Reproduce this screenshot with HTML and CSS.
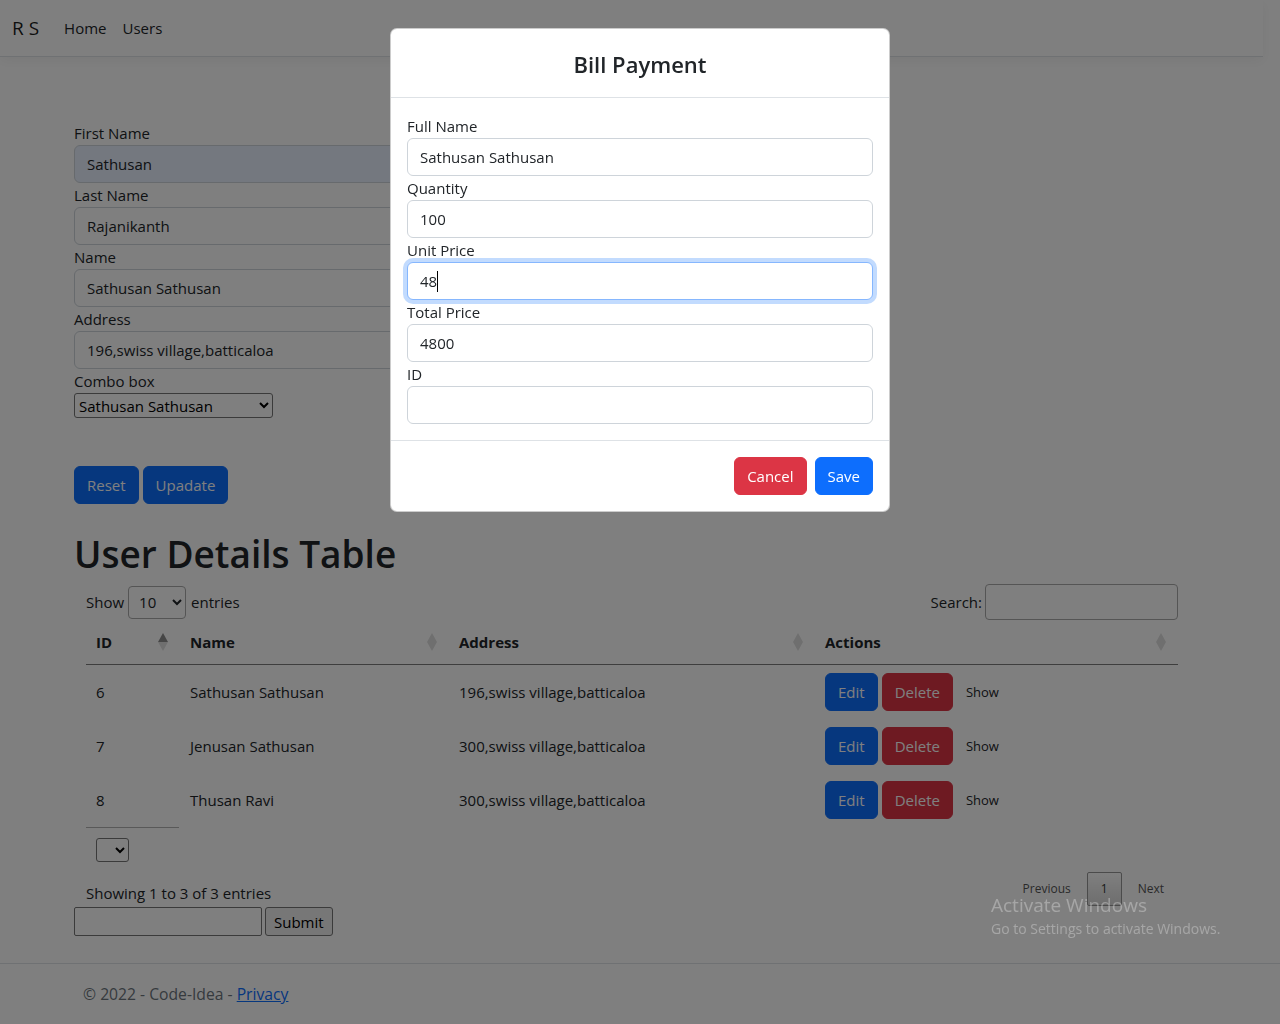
FILE: index.html
```html
<!DOCTYPE html>
<html lang="en">
<head>
<meta charset="utf-8">
<title>Users - R S</title>
<link rel="stylesheet" href="styles.css">
</head>
<body>
<header class="navbar">
  <a class="brand" href="#">R S</a>
  <nav class="nav">
    <a class="nav-link" href="#">Home</a>
    <a class="nav-link" href="#">Users</a>
  </nav>
</header>

<main class="container">
  <form class="user-form">
    <div class="field"><label>First Name</label><input class="form-control autofill" value="Sathusan"></div>
    <div class="field"><label>Last Name</label><input class="form-control" value="Rajanikanth"></div>
    <div class="field"><label>Name</label><input class="form-control" value="Sathusan Sathusan"></div>
    <div class="field"><label>Address</label><input class="form-control" value="196,swiss village,batticaloa"></div>
    <div class="field"><label>Combo box</label><select class="combo"><option>Sathusan Sathusan</option></select></div>
    <div class="form-actions">
      <button type="button" class="btn btn-primary">Reset</button>
      <button type="button" class="btn btn-primary">Upadate</button>
    </div>
  </form>

  <h1 class="title">User Details Table</h1>

  <div class="dt-wrapper">
    <div class="dt-top">
      <label class="dt-length">Show <select class="dt-select"><option>10</option></select> entries</label>
      <label class="dt-search">Search:<input class="dt-input"></label>
    </div>
    <table class="dt-table">
      <colgroup><col class="c-id"><col class="c-name"><col class="c-addr"><col class="c-act"></colgroup>
      <thead>
        <tr><th class="sort asc">ID</th><th class="sort">Name</th><th class="sort">Address</th><th class="sort">Actions</th></tr>
      </thead>
      <tbody>
        <tr><td>6</td><td>Sathusan Sathusan</td><td>196,swiss village,batticaloa</td>
          <td><div class="acts"><button class="btn btn-primary">Edit</button><button class="btn btn-danger">Delete</button><a class="show-link">Show</a></div></td></tr>
        <tr><td>7</td><td>Jenusan Sathusan</td><td>300,swiss village,batticaloa</td>
          <td><div class="acts"><button class="btn btn-primary">Edit</button><button class="btn btn-danger">Delete</button><a class="show-link">Show</a></div></td></tr>
        <tr><td>8</td><td>Thusan Ravi</td><td>300,swiss village,batticaloa</td>
          <td><div class="acts"><button class="btn btn-primary">Edit</button><button class="btn btn-danger">Delete</button><a class="show-link">Show</a></div></td></tr>
      </tbody>
    </table>
    <div class="dt-line"></div>
    <select class="tiny-select"></select>
    <div class="dt-bottom">
      <div class="dt-info">Showing 1 to 3 of 3 entries</div>
      <div class="dt-paginate">
        <a class="pg disabled">Previous</a><a class="pg current">1</a><a class="pg disabled">Next</a>
      </div>
    </div>
  </div>

  <form class="submit-form">
    <input class="plain-input"><button type="button" class="plain-btn">Submit</button>
  </form>
</main>

<footer class="footer">&copy; 2022 - Code-Idea - <a href="#">Privacy</a></footer>

<div class="backdrop"></div>

<div class="modal">
  <div class="modal-dialog">
    <div class="modal-content">
      <div class="modal-header"><h4 class="modal-title">Bill Payment</h4></div>
      <div class="modal-body">
        <div class="field"><label>Full Name</label><input class="form-control" value="Sathusan Sathusan"></div>
        <div class="field"><label>Quantity</label><input class="form-control" value="100"></div>
        <div class="field"><label>Unit Price</label>
          <div class="caret-wrap"><input class="form-control focused" value="48"><span class="caret"></span></div>
        </div>
        <div class="field"><label>Total Price</label><input class="form-control" value="4800"></div>
        <div class="field"><label>ID</label><input class="form-control" value=""></div>
      </div>
      <div class="modal-footer">
        <button type="button" class="btn btn-danger">Cancel</button>
        <button type="button" class="btn btn-save">Save</button>
      </div>
    </div>
  </div>
</div>

<div class="watermark">
  <div class="wm-title">Activate Windows</div>
  <div class="wm-sub">Go to Settings to activate Windows.</div>
</div>
</body>
</html>
```

FILE: styles.css
```css
* { box-sizing: border-box; }
html, body { margin: 0; }
body {
  font-family: "Open Sans", "Noto Sans", sans-serif;
  font-size: 15px;
  line-height: 24px;
  color: #212529;
  background: #fff;
  height: 1024px;
  overflow: hidden;
}

/* navbar */
.navbar {
  display: flex;
  align-items: center;
  height: 57px;
  margin-right: 17px;
  padding: 0 12px;
  border-bottom: 1px solid #dee2e6;
  box-shadow: 0 4px 12px rgba(0,0,0,.05);
  background: #fff;
}
.brand {
  font-size: 19px;
  line-height: 30px;
  color: rgba(0,0,0,.9);
  text-decoration: none;
  margin-right: 17px;
}
.nav { display: flex; }
.nav-link {
  padding: 8px;
  color: #212529;
  text-decoration: none;
}

/* main */
.container {
  width: 1116px;
  margin: 64px 0 0 74px;
}
.field label { display: block; line-height: 24px; }
.form-control {
  display: block;
  width: 356px;
  height: 38px;
  padding: 6px 12px;
  font: inherit;
  color: #212529;
  background: #fff;
  border: 1px solid #ced4da;
  border-radius: 6px;
  outline: none;
}
.autofill { background: #e8f0fe; }
.combo {
  display: block;
  width: 199px;
  height: 25px;
  font-family: inherit;
  font-size: 15px;
  color: #000;
  background: #fff;
  border: 1px solid #767676;
  border-radius: 3px;
}
.form-actions {
  display: flex;
  gap: 4px;
  margin-top: 48px;
}
.btn {
  display: inline-block;
  font: inherit;
  line-height: 24px;
  padding: 6px 12px;
  border: 1px solid transparent;
  border-radius: 6px;
  color: #fff;
  cursor: pointer;
}
.btn-primary { background: #0d6efd; border-color: #0d6efd; }
.btn-danger { background: #dc3545; border-color: #dc3545; }
.btn-save { background: #0d6efd; border-color: #0d6efd; }

.title {
  margin: 26px 0 6px;
  font-size: 37px;
  font-weight: 600;
  line-height: 48px;
}

/* datatable */
.dt-wrapper { margin: 0 12px; }
.dt-top {
  display: flex;
  justify-content: space-between;
  align-items: center;
  height: 36px;
}
.dt-length, .dt-search { display: flex; align-items: center; }
.dt-select {
  width: 58px;
  height: 33px;
  margin: 0 5px 0 4px;
  padding: 4px 6px;
  font-family: inherit;
  font-size: 15px;
  color: #212529;
  background: transparent;
  border: 1px solid #aaa;
  border-radius: 4px;
}
.dt-input {
  width: 193px;
  height: 36px;
  margin-left: 3px;
  border: 1px solid #aaa;
  border-radius: 4px;
  background: transparent;
  font: inherit;
}
.dt-table {
  width: 1092px;
  border-collapse: collapse;
  table-layout: fixed;
}
.c-id { width: 94px; }
.c-name { width: 269px; }
.c-addr { width: 366px; }
.c-act { width: 363px; }
.dt-table th {
  position: relative;
  text-align: left;
  font-weight: 700;
  height: 44px;
  padding: 10px 18px 10px 10px;
  border-bottom: 1px solid rgba(0,0,0,.3);
}
.sort::before, .sort::after {
  content: "";
  position: absolute;
  right: 12px;
  width: 0;
  height: 0;
  border-left: 5px solid transparent;
  border-right: 5px solid transparent;
}
.sort::before {
  top: 13px;
  border-bottom: 9px solid rgba(0,0,0,.13);
}
.sort::after {
  top: 22px;
  border-top: 9px solid rgba(0,0,0,.13);
}
.sort.asc::before { border-bottom-color: rgba(0,0,0,.45); }
.dt-table td {
  height: 54px;
  padding: 8px 10px;
  vertical-align: middle;
}
.acts { display: flex; align-items: center; gap: 4px; }
.show-link {
  margin-left: 9px;
  font-size: 13px;
  color: #212529;
}
.dt-line {
  width: 93px;
  border-top: 1px solid rgba(0,0,0,.3);
}
.tiny-select {
  display: block;
  width: 33px;
  height: 24px;
  margin: 10px 0 0 10px;
  border: 1px solid #767676;
  border-radius: 3px;
  background: #fff;
}
.dt-bottom {
  display: flex;
  justify-content: space-between;
  align-items: flex-end;
  margin-top: 10px;
}
.dt-info { line-height: 24px; margin-bottom: 1px; }
.dt-paginate { display: flex; font-size: 12px; line-height: 20px; }
.pg {
  display: block;
  padding: 6px 13px;
  margin-left: 2px;
  border: 1px solid transparent;
  border-radius: 2px;
  color: #333;
}
.pg.disabled { color: #555; }
.pg.current {
  padding: 6px 13px;
  border-color: #979797;
  background: linear-gradient(to bottom, #fff 0%, #dcdcdc 100%);
}

.submit-form { display: flex; gap: 3px; margin-top: 1px; }
.plain-input {
  width: 188px;
  height: 29px;
  border: 1px solid #767676;
  border-radius: 2px;
  font: inherit;
}
.plain-btn {
  height: 29px;
  padding: 0 8px;
  font: inherit;
  line-height: 24px;
  color: #000;
  background: #efefef;
  border: 1px solid #767676;
  border-radius: 3px;
}

.footer {
  margin-top: 27px;
  border-top: 1px solid #dee2e6;
  font-size: 15.7px;
  line-height: 60px;
  padding-left: 83px;
  color: #6c757d;
  white-space: nowrap;
}
.footer a { color: #0d6efd; }

/* overlay */
.backdrop {
  position: fixed;
  inset: 0;
  background: rgba(0,0,0,.5);
}
.modal {
  position: fixed;
  inset: 0;
  display: flex;
  justify-content: center;
  align-items: flex-start;
}
.modal-dialog { width: 500px; margin-top: 28px; }
.modal-content {
  background: #fff;
  border: 1px solid rgba(0,0,0,.2);
  border-radius: 7px;
  overflow: hidden;
}
.modal-header {
  height: 69px;
  padding: 16px;
  border-bottom: 1px solid #dee2e6;
  text-align: center;
}
.modal-title {
  margin: 0;
  font-size: 22px;
  font-weight: 600;
  line-height: 38px;
}
.modal-body { padding: 16px; }
.modal-body .form-control { width: 100%; }
.form-control.focused {
  border-color: #86b7fe;
  box-shadow: 0 0 0 4px rgba(13,110,253,.25);
}
.caret-wrap { position: relative; }
.caret {
  position: absolute;
  left: 30px;
  top: 9px;
  width: 1px;
  height: 21px;
  background: #000;
}
.modal-footer {
  display: flex;
  justify-content: flex-end;
  gap: 8px;
  padding: 16px;
  border-top: 1px solid #dee2e6;
}

.watermark {
  position: fixed;
  left: 991px;
  top: 891px;
  color: rgba(255,255,255,.3);
  white-space: nowrap;
}
.wm-title { font-size: 19px; line-height: 28px; }
.wm-sub { font-size: 14px; line-height: 20px; }
```
